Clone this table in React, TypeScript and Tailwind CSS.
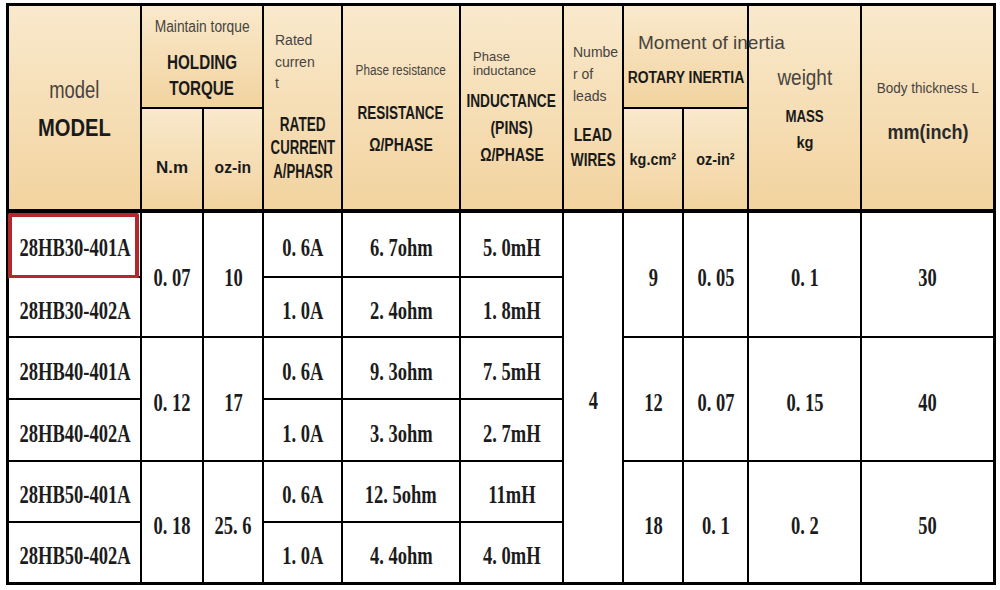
const rowStarts = ["row-start-3", "row-start-4", "row-start-5", "row-start-6", "row-start-7", "row-start-8"];
const groupStarts = ["row-start-3", "row-start-5", "row-start-7"];

const rows = [
  { model: "28HB30-401A", amp: "0. 6A", res: "6. 7ohm", ind: "5. 0mH" },
  { model: "28HB30-402A", amp: "1. 0A", res: "2. 4ohm", ind: "1. 8mH" },
  { model: "28HB40-401A", amp: "0. 6A", res: "9. 3ohm", ind: "7. 5mH" },
  { model: "28HB40-402A", amp: "1. 0A", res: "3. 3ohm", ind: "2. 7mH" },
  { model: "28HB50-401A", amp: "0. 6A", res: "12. 5ohm", ind: "11mH" },
  { model: "28HB50-402A", amp: "1. 0A", res: "4. 4ohm", ind: "4. 0mH" },
];

const groups = [
  { nm: "0. 07", oz: "10", kg: "9", oz2: "0. 05", mass: "0. 1", thick: "30" },
  { nm: "0. 12", oz: "17", kg: "12", oz2: "0. 07", mass: "0. 15", thick: "40" },
  { nm: "0. 18", oz: "25. 6", kg: "18", oz2: "0. 1", mass: "0. 2", thick: "50" },
];

const head = "bg-linear-to-b from-[#f9e9cc] to-[#f2d39f] flex flex-col items-center";
const cell = "bg-white flex items-center justify-center pt-[6px]";
const num = "inline-block whitespace-nowrap scale-x-[0.74] font-['Liberation_Serif',serif] font-bold text-[25px] leading-none text-[#1c1c1c]";
const small = "inline-block whitespace-nowrap text-[#474340]";
const bold = "inline-block whitespace-nowrap font-bold text-[#1a1a1a]";

export default function App() {
  return (
    <div className="w-[1000px] h-[590px] bg-white pt-[3px] pl-[6px] font-['Liberation_Sans',Arial,sans-serif]">
      <div className="grid w-[990px] bg-black p-[3px] gap-[2px] grid-cols-[131px_60px_58px_77px_116px_101px_58px_58px_63px_111px_131px] grid-rows-[101px_102px_63px_58px_60px_60px_59px_59px]">
        {/* header */}
        <div className={`${head} col-start-1 row-start-1 row-span-2 border-b-2 border-black pt-[71px]`}>
          <span className={`${small} text-[23px] leading-[26px] scale-x-[0.8]`}>model</span>
          <span className={`${bold} text-[24px] leading-[28px] mt-[11px] scale-x-[0.84]`}>MODEL</span>
        </div>
        <div className={`${head} col-start-2 col-span-2 row-start-1 pt-[11px]`}>
          <span className={`${small} text-[16px] leading-[20px] scale-x-[0.86]`}>Maintain torque</span>
          <span className={`${bold} text-[20px] leading-[26px] mt-[12px] scale-x-[0.76]`}>HOLDING</span>
          <span className={`${bold} text-[20px] leading-[26px] scale-x-[0.76]`}>TORQUE</span>
        </div>
        <div className={`${head} col-start-2 row-start-2 border-b-2 border-black pt-[49px]`}>
          <span className={`${bold} text-[17px] leading-[20px]`}>N.m</span>
        </div>
        <div className={`${head} col-start-3 row-start-2 border-b-2 border-black pt-[49px]`}>
          <span className={`${bold} text-[17px] leading-[20px] scale-x-[0.92]`}>oz-in</span>
        </div>
        <div className={`${head} col-start-4 row-start-1 row-span-2 border-b-2 border-black pt-[24px]`}>
          <div className="self-start pl-[11px] flex flex-col text-[14px] leading-[21.5px] text-[#474340]">
            <span>Rated</span>
            <span>curren</span>
            <span>t</span>
          </div>
          <span className={`${bold} text-[20px] leading-[23.5px] mt-[18px] scale-x-[0.68]`}>RATED</span>
          <span className={`${bold} text-[20px] leading-[23.5px] scale-x-[0.66]`}>CURRENT</span>
          <span className={`${bold} text-[20px] leading-[23.5px] scale-x-[0.66]`}>A/PHASR</span>
        </div>
        <div className={`${head} col-start-5 row-start-1 row-span-2 border-b-2 border-black pt-[55px]`}>
          <span className={`${small} text-[14px] leading-[18px] scale-x-[0.84]`}>Phase resistance</span>
          <span className={`${bold} text-[19px] leading-[28px] mt-[20px] scale-x-[0.71]`}>RESISTANCE</span>
          <span className={`${bold} text-[19px] leading-[28px] mt-[4px] scale-x-[0.74]`}>Ω/PHASE</span>
        </div>
        <div className={`${head} col-start-6 row-start-1 row-span-2 border-b-2 border-black pt-[44px]`}>
          <div className="self-start pl-[12px] flex flex-col text-[13px] leading-[14px] text-[#474340]">
            <span>Phase</span>
            <span>inductance</span>
          </div>
          <span className={`${bold} text-[19px] leading-[27px] mt-[9px] scale-x-[0.72]`}>INDUCTANCE</span>
          <span className={`${bold} text-[19px] leading-[27px] scale-x-[0.74]`}>(PINS)</span>
          <span className={`${bold} text-[19px] leading-[27px] scale-x-[0.74]`}>Ω/PHASE</span>
        </div>
        <div className={`${head} col-start-7 row-start-1 row-span-2 border-b-2 border-black pt-[35px]`}>
          <div className="self-start pl-[9px] flex flex-col text-[14px] leading-[22px] text-[#474340]">
            <span>Numbe</span>
            <span>r of</span>
            <span>leads</span>
          </div>
          <span className={`${bold} text-[19px] leading-[25px] mt-[15px] scale-x-[0.74]`}>LEAD</span>
          <span className={`${bold} text-[19px] leading-[25px] scale-x-[0.72]`}>WIRES</span>
        </div>
        <div className={`${head} col-start-8 col-span-2 row-start-1 pt-[25px] relative z-10`}>
          <span className={`${small} self-start pl-[14px] text-[19px] leading-[24px]`}>Moment of inertia</span>
          <span className={`${bold} text-[16px] leading-[20px] mt-[13px] scale-x-[0.87]`}>ROTARY INERTIA</span>
        </div>
        <div className={`${head} col-start-8 row-start-2 border-b-2 border-black pt-[41px]`}>
          <span className={`${bold} text-[16px] leading-[20px] scale-x-[0.9]`}>kg.cm²</span>
        </div>
        <div className={`${head} col-start-9 row-start-2 border-b-2 border-black pt-[41px]`}>
          <span className={`${bold} text-[16px] leading-[20px] scale-x-[0.9]`}>oz-in²</span>
        </div>
        <div className={`${head} col-start-10 row-start-1 row-span-2 border-b-2 border-black pt-[59px]`}>
          <span className={`${small} text-[22px] leading-[26px] scale-x-[0.86]`}>weight</span>
          <span className={`${bold} text-[17px] leading-[24px] mt-[14px] scale-x-[0.78]`}>MASS</span>
          <span className={`${bold} text-[17px] leading-[24px] mt-[2px] scale-x-[0.86]`}>kg</span>
        </div>
        <div className={`${head} col-start-11 row-start-1 row-span-2 border-b-2 border-black pt-[72px]`}>
          <span className={`${small} text-[15px] leading-[20px] scale-x-[0.9]`}>Body thickness L</span>
          <span className={`${bold} text-[20px] leading-[26px] mt-[21px] scale-x-[0.9] text-[#2a2a2a]`}>mm(inch)</span>
        </div>

        {/* body rows */}
        {rows.map((r, i) => (
          <div key={`m${i}`} className={`${cell} col-start-1 ${rowStarts[i]} relative`}>
            <span className={num}>{r.model}</span>
            {i === 0 && (
              <div className="absolute -left-[1px] top-0 right-[1px] -bottom-[3px] border-[4px] border-[#b2282d] rounded-[2px]" />
            )}
          </div>
        ))}
        {rows.map((r, i) => (
          <div key={`a${i}`} className={`${cell} col-start-4 ${rowStarts[i]}`}>
            <span className={num}>{r.amp}</span>
          </div>
        ))}
        {rows.map((r, i) => (
          <div key={`r${i}`} className={`${cell} col-start-5 ${rowStarts[i]}`}>
            <span className={num}>{r.res}</span>
          </div>
        ))}
        {rows.map((r, i) => (
          <div key={`i${i}`} className={`${cell} col-start-6 ${rowStarts[i]}`}>
            <span className={num}>{r.ind}</span>
          </div>
        ))}
        {groups.map((g, i) => (
          <div key={`n${i}`} className={`${cell} col-start-2 ${groupStarts[i]} row-span-2`}>
            <span className={num}>{g.nm}</span>
          </div>
        ))}
        {groups.map((g, i) => (
          <div key={`o${i}`} className={`${cell} col-start-3 ${groupStarts[i]} row-span-2`}>
            <span className={num}>{g.oz}</span>
          </div>
        ))}
        <div className={`${cell} col-start-7 row-start-3 row-span-6`}>
          <span className={num}>4</span>
        </div>
        {groups.map((g, i) => (
          <div key={`k${i}`} className={`${cell} col-start-8 ${groupStarts[i]} row-span-2`}>
            <span className={num}>{g.kg}</span>
          </div>
        ))}
        {groups.map((g, i) => (
          <div key={`z${i}`} className={`${cell} col-start-9 ${groupStarts[i]} row-span-2`}>
            <span className={num}>{g.oz2}</span>
          </div>
        ))}
        {groups.map((g, i) => (
          <div key={`w${i}`} className={`${cell} col-start-10 ${groupStarts[i]} row-span-2`}>
            <span className={num}>{g.mass}</span>
          </div>
        ))}
        {groups.map((g, i) => (
          <div key={`t${i}`} className={`${cell} col-start-11 ${groupStarts[i]} row-span-2`}>
            <span className={num}>{g.thick}</span>
          </div>
        ))}
      </div>
    </div>
  );
}
